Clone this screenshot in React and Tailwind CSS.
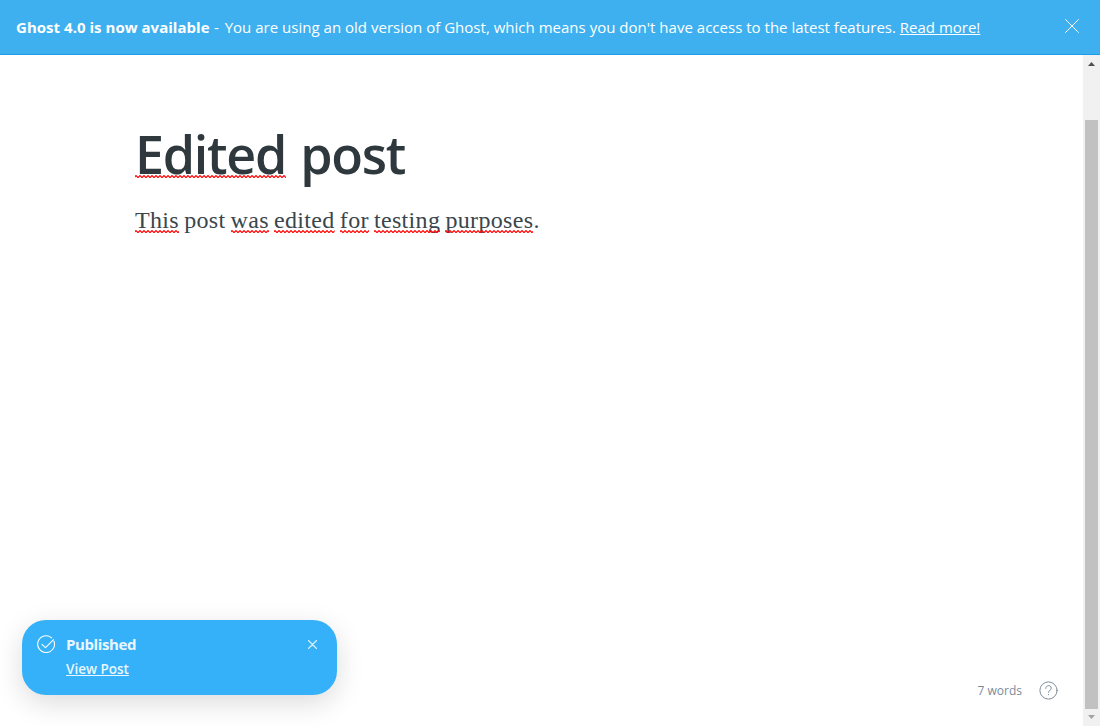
import React from "react";

function Misspelled({ children, line }) {
  const id = React.useId();
  return (
    <span className="relative inline-block whitespace-nowrap">
      {children}
      <svg className={`absolute left-0 h-[3px] w-full ${line}`} aria-hidden="true">
        <defs>
          <pattern id={id} width="4" height="3" patternUnits="userSpaceOnUse">
            <path d="M-1 2.6 L1 .6 L3 2.6 L5 .6" fill="none" stroke="#ff0000" strokeWidth="1.2" />
          </pattern>
        </defs>
        <rect width="100%" height="3" fill={`url(#${id})`} />
      </svg>
    </span>
  );
}

function Cross({ className }) {
  return (
    <svg className={className} viewBox="0 0 14 14" fill="none" stroke="currentColor" strokeLinecap="round" aria-hidden="true">
      <path d="M.6 .6 L13.4 13.4 M13.4 .6 L.6 13.4" />
    </svg>
  );
}

function Banner() {
  return (
    <header className="flex h-[55px] shrink-0 items-center justify-between border-b border-[#1a9ceb] bg-[#3eb0ef] pr-[21px] pl-4 text-white">
      <p className="whitespace-nowrap text-[15px] leading-6">
        <b className="inline-block w-[194px] font-bold tracking-[0.03px]">Ghost 4.0 is now available</b>{" "}
        <span className="inline-block w-[682px] tracking-[0.015px]">
          -<span className="ml-[2px]"> You are using an old version of Ghost, which means you don't have access to the latest features.</span>
        </span>{" "}
        <a href="#more" className="underline underline-offset-1 [text-decoration-skip-ink:none]">Read more!</a>
      </p>
      <button aria-label="Close announcement" className="mt-[-2px]">
        <Cross className="h-[14px] w-[14px]" />
      </button>
    </header>
  );
}

function Toast() {
  return (
    <aside className="flex h-[75px] w-[315px] rounded-[24px] bg-[#35b1f9] pt-[15px] pr-5 pl-[15px] text-white shadow-[0_8px_28px_rgba(0,0,0,0.14)]">
      <svg className="h-[18px] w-[18px]" viewBox="0 0 18 18" fill="none" stroke="currentColor" strokeWidth="1.1" strokeLinecap="round" strokeLinejoin="round" aria-hidden="true">
        <path d="M14.6 2.8 A8.4 8.4 0 1 0 17 6.3" />
        <path d="M5 9.4 L8.5 12.6 L16.6 4.6" />
      </svg>
      <div className="-mt-[3px] ml-[11px] flex-1">
        <p className="text-[15px] leading-[25px] font-bold tracking-[-0.4px] opacity-90">Published</p>
        <a href="#post" className="block w-fit text-[13.5px] leading-[24px] font-semibold tracking-[0px] underline underline-offset-1 opacity-90 [text-decoration-skip-ink:none]">View Post</a>
      </div>
      <button aria-label="Dismiss" className="mt-[5px] h-[9px] w-[9px] opacity-80">
        <Cross className="h-[9px] w-[9px] [stroke-width:2]" />
      </button>
    </aside>
  );
}

function Scrollbar() {
  return (
    <div className="flex w-[17px] shrink-0 flex-col items-center bg-[#f1f1f1]">
      <svg className="h-[17px] w-[17px]" viewBox="0 0 17 17" fill="#505050" aria-hidden="true"><path d="M5 11 H12 L8.5 7 Z" /></svg>
      <div className="mt-12 w-[13px] flex-1 bg-[#c1c1c1]" />
      <svg className="h-[17px] w-[17px]" viewBox="0 0 17 17" fill="#a3a3a3" aria-hidden="true"><path d="M5 6 H12 L8.5 10 Z" /></svg>
    </div>
  );
}

export default function App() {
  return (
    <div className="flex h-[726px] w-[1100px] flex-col overflow-hidden bg-white font-['Open_Sans','Noto_Sans',sans-serif]">
      <Banner />
      <div className="flex min-h-0 flex-1">
        <main className="flex min-w-0 flex-1 flex-col">
          <article className="flex-1 pt-[65px] pl-[135px]">
            <h1 className="text-[52px] leading-[68px] font-semibold tracking-[-1.3px] text-[#2e383d] [word-spacing:2px]">
              <Misspelled line="bottom-[10px]">Edited</Misspelled> post
            </h1>
            <p className="mt-[15px] font-['Liberation_Serif',serif] text-[24px] leading-[34px] tracking-[0.33px] text-[#3a464c] [word-spacing:-1.2px]">
              <Misspelled line="bottom-[4px]">This</Misspelled> post <Misspelled line="bottom-[4px]">was</Misspelled>{" "}
              <Misspelled line="bottom-[4px]">edited</Misspelled> <Misspelled line="bottom-[4px]">for</Misspelled>{" "}
              <Misspelled line="bottom-[4px]">testing</Misspelled> <Misspelled line="bottom-[4px]">purposes</Misspelled>.
            </p>
          </article>
          <footer className="flex items-end justify-between pr-[25px] pl-[22px]">
            <div className="pb-[31px]">
              <Toast />
            </div>
            <div className="flex items-center gap-[17px] pb-[26px] text-[#7c8b9a]">
              <span className="text-[12px] leading-[18px]">7 words</span>
              <svg className="h-[19px] w-[19px]" viewBox="0 0 19 19" fill="none" stroke="currentColor" strokeLinecap="round" aria-hidden="true">
                <circle cx="9.5" cy="9.5" r="8.6" />
                <path d="M6.7 7.4 C6.7 3.6 12.3 3.8 12.3 7.2 C12.3 9.4 9.5 9.2 9.5 11.3" />
                <circle cx="9.5" cy="13.6" r=".6" fill="currentColor" stroke="none" />
              </svg>
            </div>
          </footer>
        </main>
        <Scrollbar />
      </div>
    </div>
  );
}
